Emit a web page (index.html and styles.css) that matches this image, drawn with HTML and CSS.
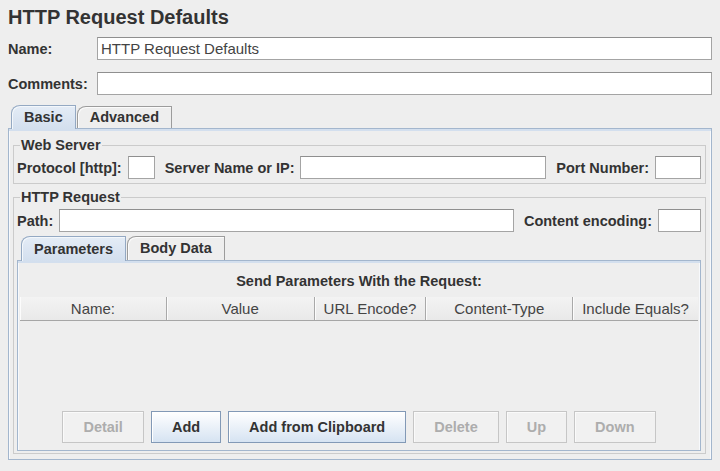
FILE: index.html
```html
<!DOCTYPE html>
<html lang="en">
<head>
    <meta charset="UTF-8">
    <title>HTTP Request Defaults</title>
    <link rel="stylesheet" href="styles.css">
</head>
<body>
    <div class="page">
        <h1 class="title">HTTP Request Defaults</h1>

        <div class="form-row first">
            <label class="row-label">Name:</label>
            <input class="field grow" type="text" value="HTTP Request Defaults">
        </div>
        <div class="form-row">
            <label class="row-label">Comments:</label>
            <input class="field grow" type="text" value="">
        </div>

        <div class="tabs outer-tabs">
            <div class="tab selected">Basic</div>
            <div class="tab">Advanced</div>
        </div>
        <div class="tab-panel outer-panel">
            <fieldset class="group">
                <legend>Web Server</legend>
                <div class="line">
                    <label>Protocol [http]:</label>
                    <input class="field protocol" type="text">
                    <label class="next">Server Name or IP:</label>
                    <input class="field grow" type="text">
                    <label class="next">Port Number:</label>
                    <input class="field port" type="text">
                </div>
            </fieldset>

            <fieldset class="group request">
                <legend>HTTP Request</legend>
                <div class="line">
                    <label>Path:</label>
                    <input class="field grow" type="text">
                    <label class="next">Content encoding:</label>
                    <input class="field encoding" type="text">
                </div>

                <div class="tabs inner-tabs">
                    <div class="tab selected">Parameters</div>
                    <div class="tab">Body Data</div>
                </div>
                <div class="tab-panel inner-panel">
                    <div class="caption">Send Parameters With the Request:</div>
                    <div class="table-head">
                        <div class="col">Name:</div>
                        <div class="col">Value</div>
                        <div class="col">URL Encode?</div>
                        <div class="col">Content-Type</div>
                        <div class="col">Include Equals?</div>
                    </div>
                    <div class="table-body"></div>
                    <div class="buttons">
                        <button class="btn" disabled>Detail</button>
                        <button class="btn">Add</button>
                        <button class="btn">Add from Clipboard</button>
                        <button class="btn" disabled>Delete</button>
                        <button class="btn" disabled>Up</button>
                        <button class="btn" disabled>Down</button>
                    </div>
                </div>
            </fieldset>
        </div>
    </div>
</body>
</html>
```

FILE: styles.css
```css
* {
    margin: 0;
    padding: 0;
    box-sizing: border-box;
}

body {
    font-family: 'Liberation Sans', Arial, sans-serif;
    background: #eeeeee;
    color: #333;
    width: 720px;
    height: 471px;
    overflow: hidden;
}

.page {
    padding: 0 8px;
}

.title {
    font-size: 20px;
    line-height: 22px;
    font-weight: bold;
    margin-top: 6px;
    color: #333;
}

/* name / comments rows */
.form-row {
    display: flex;
    align-items: center;
    height: 23px;
    margin-top: 12px;
}

.form-row.first {
    margin-top: 9px;
}

.row-label {
    width: 89px;
    font-size: 14.5px;
    font-weight: bold;
}

.field {
    height: 23px;
    border: 1px solid #a4a4a4;
    border-top-color: #8f8f8f;
    background: #fff;
    font-family: 'Liberation Sans', Arial, sans-serif;
    font-size: 15px;
    color: #444;
    padding: 0 3px;
    outline: none;
}

.grow {
    flex: 1;
    min-width: 0;
}

/* tabs */
.tabs {
    display: flex;
    align-items: flex-end;
    position: relative;
    z-index: 1;
}

.outer-tabs {
    margin-top: 10px;
    padding-left: 3px;
}

.inner-tabs {
    margin-top: 4px;
    padding-left: 4px;
}

.tab {
    height: 22px;
    padding: 0 12px 0 12px;
    font-size: 14.5px;
    font-weight: bold;
    line-height: 21px;
    color: #333;
    background: #eeeeee;
    border: 1px solid #9c9c9c;
    border-bottom: none;
    border-top-left-radius: 9px 8px;
    box-shadow: inset 1px 1px 0 #fbfbfb;
    margin-right: 1px;
}

.tab.selected {
    height: 24px;
    line-height: 23px;
    margin-bottom: -1px;
    background: linear-gradient(#e4ecf6, #d3dfee);
    border-color: #94a9c3;
    box-shadow: inset 1px 1px 0 #f3f7fb;
}

.inner-tabs .tab {
    height: 24px;
    line-height: 23px;
}

.inner-tabs .tab.selected {
    height: 25px;
    line-height: 24px;
}

.tab-panel {
    border: 1px solid #a3b6cd;
    box-shadow: inset 0 2px 0 #d3dfee, inset 1px 0 0 #f7f9fc, inset -1px 0 0 #f7f9fc;
}

.outer-panel {
    padding: 8px 5px 5px 4px;
}

/* titled groups */
.group {
    border: 1px solid #cbcbcb;
    padding: 3px 4px 4px 3px;
    min-width: 0;
}

.group legend {
    font-size: 14.5px;
    font-weight: bold;
    line-height: 16px;
    margin-left: 3px;
    padding: 0 1px;
    color: #333;
}

.group.request {
    margin-top: 5px;
    padding-bottom: 2px;
}

.line {
    display: flex;
    align-items: center;
    gap: 6px;
    height: 23px;
}

.request .line {
    margin-top: 1px;
}

.line label {
    font-size: 14.5px;
    font-weight: bold;
    white-space: nowrap;
}

.line label.next {
    margin-left: 4px;
}

.protocol {
    width: 27px;
}

.port {
    width: 46px;
}

.encoding {
    width: 43px;
}

/* parameters panel */
.inner-panel {
    padding: 11px 2px 7px 2px;
}

.caption {
    text-align: center;
    font-size: 14.5px;
    font-weight: bold;
    line-height: 18px;
}

.table-head {
    display: grid;
    grid-template-columns: 147fr 148fr 112fr 147fr 125fr;
    margin-top: 7px;
    height: 24px;
    border-bottom: 1px solid #a6a6a6;
    background: linear-gradient(#f3f3f3, #e9e9e9);
}

.col {
    text-align: center;
    font-size: 15px;
    line-height: 23px;
    color: #444;
    border-right: 1px solid #a9a9a9;
    box-shadow: inset 1px 0 0 #fcfcfc;
}

.col:last-child {
    border-right: none;
}

.table-body {
    height: 90px;
}

.buttons {
    display: flex;
    justify-content: center;
    gap: 7px;
}

.btn {
    height: 32px;
    padding: 0 20px;
    font-family: 'Liberation Sans', Arial, sans-serif;
    font-size: 14.5px;
    font-weight: bold;
    color: #333;
    border: 1px solid #8299b6;
    background: linear-gradient(#ffffff, #d6e3f2);
    box-shadow: inset 1px 1px 0 #ffffff;
}

.btn:disabled {
    color: #adadad;
    border-color: #c6c6c6;
    background: #f1f1f1;
    box-shadow: inset 1px 1px 0 #fafafa;
}
```
